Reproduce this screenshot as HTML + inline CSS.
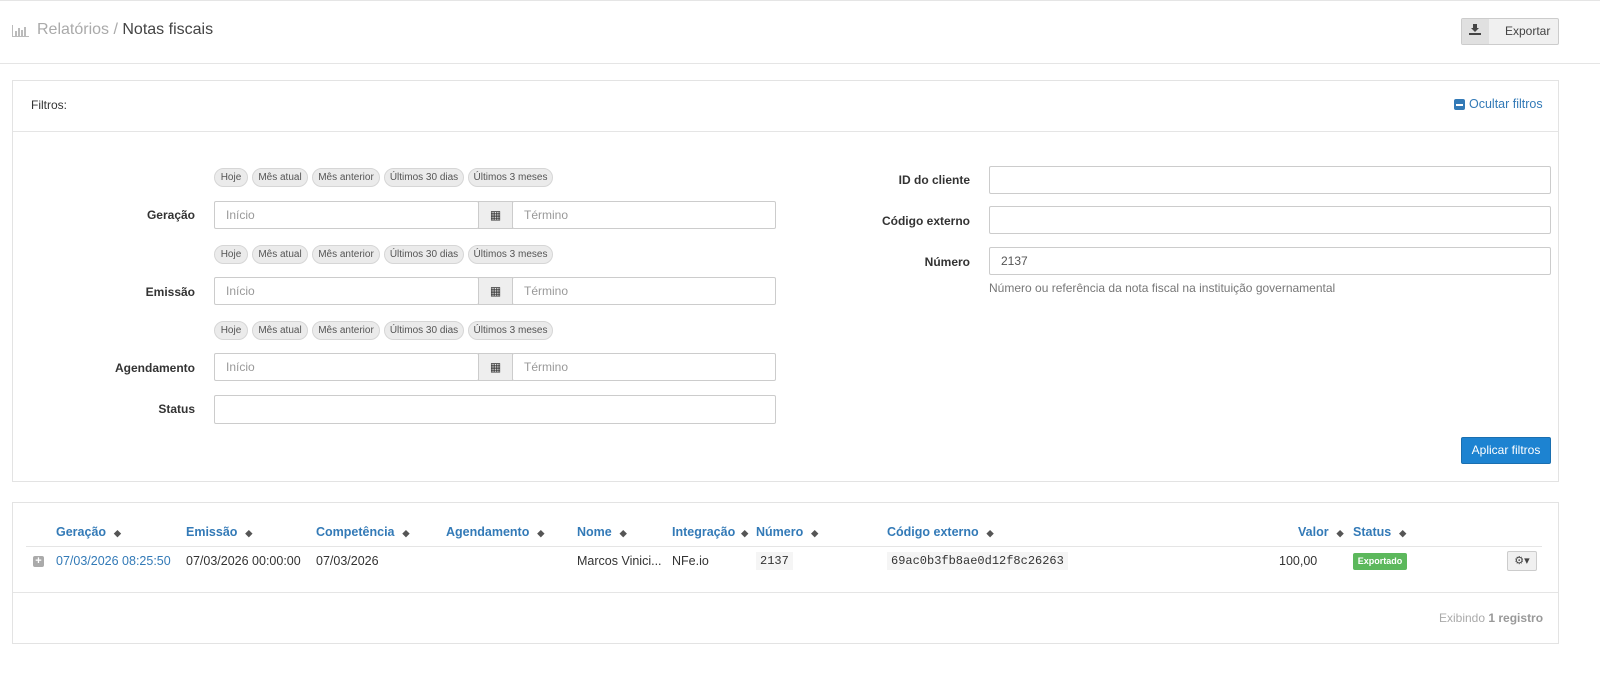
<!DOCTYPE html>
<html><head><meta charset="utf-8"><style>
*{box-sizing:border-box;margin:0;padding:0}
body{width:1600px;height:687px;background:#fff;font-family:"Liberation Sans",sans-serif;font-size:12px;color:#333;position:relative;overflow:hidden}
.a{position:absolute}
.panel{position:absolute;border:1px solid #e3e3e3;background:#fff}
.chip{position:absolute;height:19px;border:1px solid #d6d6d6;border-radius:10px;background:#ebebeb;font-size:10px;color:#555;line-height:17px;text-align:center}
.inp{position:absolute;height:28px;border:1px solid #ccc;border-radius:2px;background:#fff;color:#999;font-size:12px;line-height:26px;padding-left:11px}
.lbl{position:absolute;font-weight:bold;font-size:12px;color:#333;text-align:right}
.th{position:absolute;top:525px;font-weight:bold;color:#337ab7;font-size:12.5px}
.th i{font-style:normal;color:#555;font-size:9px;margin-left:8px}
.td{position:absolute;top:554px;font-size:12.5px;color:#333}
.code{font-family:"Liberation Mono",monospace;background:#f5f5f5;padding:2px 4px;font-size:12px}
</style></head><body>
<div class="a" style="left:0;top:0;width:1600px;height:1px;background:#e5e5e5"></div>
<svg class="a" style="left:12px;top:25px" width="17" height="12" viewBox="0 0 17 12"><g fill="#bbb"><rect x="0" y="0" width="1" height="12"/><rect x="0" y="11" width="17" height="1"/><rect x="3" y="6" width="2" height="5"/><rect x="6" y="3" width="2" height="8"/><rect x="9" y="5" width="2" height="6"/><rect x="12" y="2" width="2" height="9"/></g></svg>
<div class="a" style="left:37px;top:21px;font-size:16px;color:#aaa">Relatórios / <span style="color:#444">Notas fiscais</span></div>
<div class="a" style="left:1461px;top:18px;width:98px;height:27px;border:1px solid #ccc;border-radius:2px;background:#f0f0f0"></div>
<div class="a" style="left:1462px;top:19px;width:27px;height:25px;background:#e0e0e0"></div>
<svg class="a" style="left:1469px;top:24px" width="12" height="11" viewBox="0 0 12 11"><path d="M4 0h4v4h2L6 8 2 4h2z M0 9h12v2H0z" fill="#444"/></svg>
<div class="a" style="left:1505px;top:24px;font-size:12px;color:#444">Exportar</div>
<div class="a" style="left:0;top:63px;width:1600px;height:1px;background:#e5e5e5"></div>

<div class="panel" style="left:12px;top:80px;width:1547px;height:402px"></div>
<div class="a" style="left:31px;top:98px;font-size:12px">Filtros:</div>
<div class="a" style="left:1454px;top:99px;width:11px;height:11px;border-radius:2px;background:#337ab7"></div>
<div class="a" style="left:1456px;top:104px;width:7px;height:2px;background:#fff"></div>
<div class="a" style="left:1469px;top:97px;font-size:12.5px;color:#337ab7">Ocultar filtros</div>
<div class="a" style="left:13px;top:131px;width:1545px;height:1px;background:#e5e5e5"></div>

<!-- chip rows -->
<div id="chips"></div>
<script></script>
<div class="chip" style="left:214px;top:168px;width:34px">Hoje</div><div class="chip" style="left:252px;top:168px;width:56px">Mês atual</div><div class="chip" style="left:312px;top:168px;width:68px">Mês anterior</div><div class="chip" style="left:384px;top:168px;width:80px">Últimos 30 dias</div><div class="chip" style="left:468px;top:168px;width:85px">Últimos 3 meses</div>
<div class="chip" style="left:214px;top:245px;width:34px">Hoje</div><div class="chip" style="left:252px;top:245px;width:56px">Mês atual</div><div class="chip" style="left:312px;top:245px;width:68px">Mês anterior</div><div class="chip" style="left:384px;top:245px;width:80px">Últimos 30 dias</div><div class="chip" style="left:468px;top:245px;width:85px">Últimos 3 meses</div>
<div class="chip" style="left:214px;top:321px;width:34px">Hoje</div><div class="chip" style="left:252px;top:321px;width:56px">Mês atual</div><div class="chip" style="left:312px;top:321px;width:68px">Mês anterior</div><div class="chip" style="left:384px;top:321px;width:80px">Últimos 30 dias</div><div class="chip" style="left:468px;top:321px;width:85px">Últimos 3 meses</div>

<div class="lbl" style="right:1405px;top:208px">Geração</div>
<div class="inp" style="left:214px;top:201px;width:265px">Início</div>
<div class="a" style="left:478px;top:201px;width:35px;height:28px;border:1px solid #ccc;background:#eee;text-align:center;line-height:26px;font-size:12px">▦</div>
<div class="inp" style="left:512px;top:201px;width:264px">Término</div>

<div class="lbl" style="right:1405px;top:285px">Emissão</div>
<div class="inp" style="left:214px;top:277px;width:265px">Início</div>
<div class="a" style="left:478px;top:277px;width:35px;height:28px;border:1px solid #ccc;background:#eee;text-align:center;line-height:26px;font-size:12px">▦</div>
<div class="inp" style="left:512px;top:277px;width:264px">Término</div>

<div class="lbl" style="right:1405px;top:361px">Agendamento</div>
<div class="inp" style="left:214px;top:353px;width:265px">Início</div>
<div class="a" style="left:478px;top:353px;width:35px;height:28px;border:1px solid #ccc;background:#eee;text-align:center;line-height:26px;font-size:12px">▦</div>
<div class="inp" style="left:512px;top:353px;width:264px">Término</div>

<div class="lbl" style="right:1405px;top:402px">Status</div>
<div class="inp" style="left:214px;top:395px;width:562px;height:29px"></div>

<div class="lbl" style="right:630px;top:173px">ID do cliente</div>
<div class="inp" style="left:989px;top:166px;width:562px"></div>
<div class="lbl" style="right:630px;top:214px">Código externo</div>
<div class="inp" style="left:989px;top:206px;width:562px"></div>
<div class="lbl" style="right:630px;top:255px">Número</div>
<div class="inp" style="left:989px;top:247px;width:562px;color:#555">2137</div>
<div class="a" style="left:989px;top:281px;font-size:12px;color:#777">Número ou referência da nota fiscal na instituição governamental</div>

<div class="a" style="left:1461px;top:437px;width:90px;height:27px;background:#1d83d1;border:1px solid #1a6fb0;border-radius:2px;color:#fff;font-size:12px;text-align:center;line-height:25px">Aplicar filtros</div>

<div class="panel" style="left:12px;top:502px;width:1547px;height:142px"></div>
<div class="th" style="left:56px">Geração<i>◆</i></div>
<div class="th" style="left:186px">Emissão<i>◆</i></div>
<div class="th" style="left:316px">Competência<i>◆</i></div>
<div class="th" style="left:446px">Agendamento<i>◆</i></div>
<div class="th" style="left:577px">Nome<i>◆</i></div>
<div class="th" style="left:672px">Integração<i style="margin-left:6px">◆</i></div>
<div class="th" style="left:756px">Número<i>◆</i></div>
<div class="th" style="left:887px">Código externo<i>◆</i></div>
<div class="th" style="left:1298px">Valor<i>◆</i></div>
<div class="th" style="left:1353px">Status<i>◆</i></div>
<div class="a" style="left:26px;top:546px;width:1516px;height:1px;background:#e5e5e5"></div>
<div class="a" style="left:33px;top:556px;width:11px;height:11px;border-radius:2px;background:#aaa;color:#fff;font-size:11px;line-height:11px;text-align:center;font-weight:bold">+</div>
<div class="td" style="left:56px;color:#337ab7">07/03/2026 08:25:50</div>
<div class="td" style="left:186px">07/03/2026 00:00:00</div>
<div class="td" style="left:316px">07/03/2026</div>
<div class="td" style="left:577px">Marcos Vinici...</div>
<div class="td" style="left:672px">NFe.io</div>
<div class="td" style="left:756px;top:553px"><span class="code">2137</span></div>
<div class="td" style="left:887px;top:553px"><span class="code">69ac0b3fb8ae0d12f8c26263</span></div>
<div class="td" style="left:1279px">100,00</div>
<div class="a" style="left:1353px;top:553px;width:54px;height:17px;background:#5cb85c;border-radius:2px;color:#fff;font-size:9px;font-weight:bold;text-align:center;line-height:17px">Exportado</div>
<div class="a" style="left:1507px;top:551px;width:30px;height:20px;border:1px solid #ccc;border-radius:2px;background:#f0f0f0;font-size:11px;color:#444;text-align:center;line-height:18px">⚙▾</div>
<div class="a" style="left:13px;top:592px;width:1545px;height:1px;background:#e5e5e5"></div>
<div class="a" style="left:1439px;top:611px;font-size:12px;color:#aaa">Exibindo <b style="color:#999">1 registro</b></div>
</body></html>
